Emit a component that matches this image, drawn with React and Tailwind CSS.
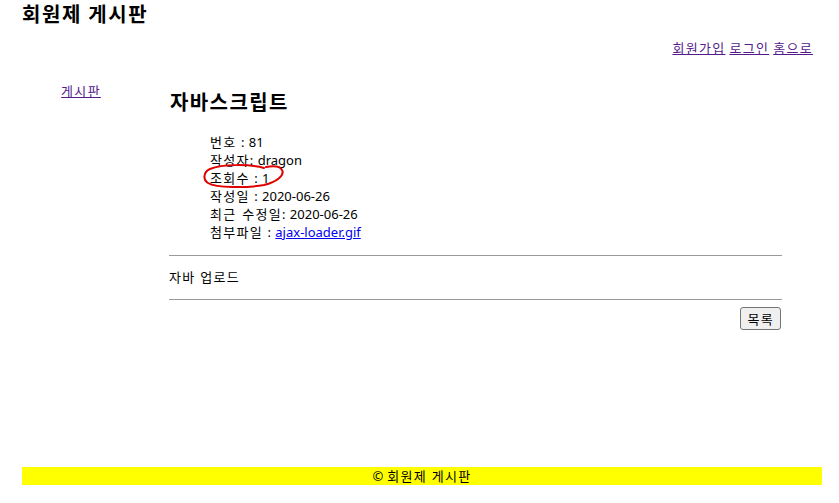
import React from "react";

const K = ({ children }) => <span className="tracking-[0.1em]">{children}</span>;

export default function App() {
  return (
    <div className="relative w-[839px] h-[503px] bg-white text-black font-['Noto_Sans','Noto_Sans_CJK_KR',sans-serif] text-[13px] leading-[18px]">
      <div className="pl-[22px] pt-[1px] text-[20px] leading-[25px] font-bold tracking-[0.08em] font-['Noto_Sans_CJK_KR',sans-serif]">회원제 게시판</div>
      <div className="mt-[13px] flex justify-end pr-[26px] gap-[4px]">
        <a href="#" className="underline text-[#551a8b]"><K>회원가입</K></a>
        <a href="#" className="underline text-[#551a8b]"><K>로그인</K></a>
        <a href="#" className="underline text-[#551a8b]"><K>홈으로</K></a>
      </div>
      <div className="mt-[25px] flex">
        <div className="w-[118px] ml-[22px] flex justify-center">
          <a href="#" className="underline text-[#551a8b]"><K>게시판</K></a>
        </div>
        <div className="ml-[29px] w-[613px]">
          <div className="mt-[6px] pl-[1px] text-[20px] leading-[28px] font-bold tracking-[0.07em] font-['Noto_Sans_CJK_KR',sans-serif]">자바스크립트</div>
          <div className="relative mt-[17px] pl-[41px] [word-spacing:1px]">
            <div><K>번호</K> : 81</div>
            <div><K>작성자</K>: dragon</div>
            <div><K>조회수</K> : 1</div>
            <div><K>작성일</K> : 2020-06-26</div>
            <div><K>최근 수정일</K>: 2020-06-26</div>
            <div>
              <K>첨부파일</K> :{" "}
              <a href="#" className="underline text-[#0000ee]">ajax-loader.gif</a>
            </div>
            <svg className="absolute left-[33px] top-[30px]" width="86" height="28" viewBox="0 0 86 28" fill="none">
              <path
                d="M62 5 C 48 1, 20 1, 8 6 C 1 9, 1 17, 6 20 C 14 25, 45 25, 62 22 C 75 19, 83 12, 80 7 C 78 3, 70 3, 64 4"
                stroke="#e00000"
                strokeWidth="2"
                strokeLinecap="round"
              />
            </svg>
          </div>
          <div className="mt-[14px] h-px bg-[#9a9a9a]" />
          <div className="mt-[12px]"><K>자바 업로드</K></div>
          <div className="mt-[13px] h-px bg-[#9a9a9a]" />
          <div className="mt-[7px] flex justify-end pr-[1px]">
            <button className="h-[23px] px-[6px] border border-[#767676] rounded-[3px] bg-[#efefef] text-[13px] leading-[18px]"><K>목록</K></button>
          </div>
        </div>
      </div>
      <div className="mt-[137px] mx-[22px] w-[800px] h-[18px] bg-[#ffff00] flex items-center justify-center text-[13px] leading-[18px]">© <span className="ml-[4px]"><K>회원제 게시판</K></span></div>
    </div>
  );
}
